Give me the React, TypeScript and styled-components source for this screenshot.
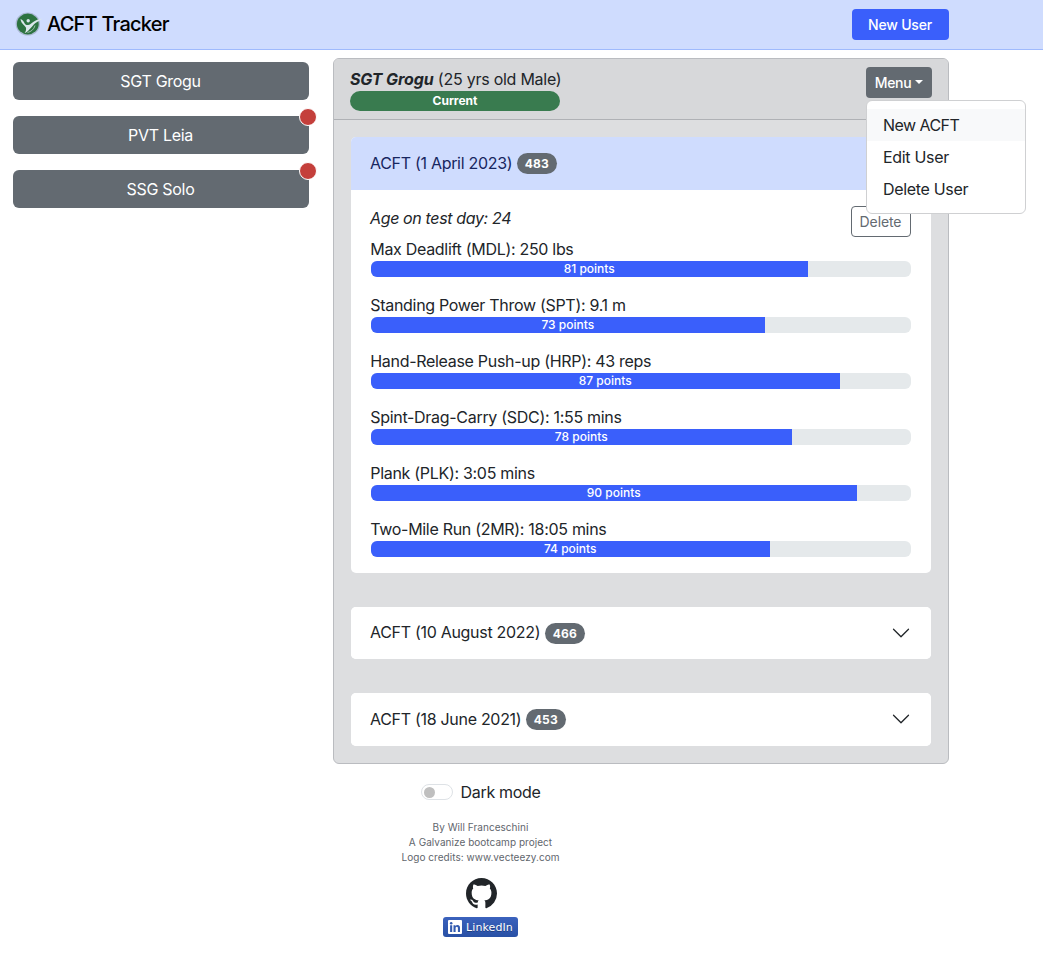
import React from 'react';
import styled, { createGlobalStyle } from 'styled-components';
import { BsChevronDown, BsGithub } from 'react-icons/bs';

const GlobalStyle = createGlobalStyle`
  *, *::before, *::after { box-sizing: border-box; }
  body {
    margin: 0;
    background: #fff;
    color: #212529;
    font-family: Inter, "Liberation Sans", sans-serif;
    font-size: 16px;
    line-height: 24px;
    letter-spacing: -0.3px;
  }
  button { font: inherit; letter-spacing: inherit; }
`;

const Navbar = styled.header`
  height: 50px;
  background: #cfdcfe;
  border-bottom: 1px solid #9fbafd;
`;

const Container = styled.div`
  width: 960px;
  margin-left: 1px;
  padding: 0 12px;
`;

const NavInner = styled(Container)`
  display: flex;
  align-items: center;
  justify-content: space-between;
  height: 49px;
`;

const Brand = styled.div`
  display: flex;
  align-items: center;
  gap: 4px;
  padding: 0 0 2px 2px;
  color: #000;
  font-size: 20px;
  font-weight: 500;
  letter-spacing: -0.77px;
  line-height: 30px;
`;

const NewUserButton = styled.button`
  width: 97px;
  height: 31px;
  padding: 0 1px 0 0;
  border: 0;
  border-radius: 4px;
  background: #3a5ffb;
  color: #fff;
  font-size: 14px;
  font-weight: 500;
  letter-spacing: -0.2px;
`;

const Columns = styled(Container)`
  display: grid;
  grid-template-columns: 296px 616px;
  column-gap: 24px;
  align-items: start;
  padding-top: 8px;
`;

const Sidebar = styled.nav`
  display: flex;
  flex-direction: column;
  gap: 16px;
  padding-top: 4px;
`;

const UserButton = styled.button`
  position: relative;
  height: 38px;
  padding: 0 1px 0 0;
  border: 0;
  border-radius: 6px;
  background: #636a71;
  color: #fff;
`;

const AlertDot = styled.span`
  position: absolute;
  top: -8px;
  right: -8px;
  width: 18px;
  height: 18px;
  border: 1px solid #fff;
  border-radius: 50%;
  background: #c43f3b;
`;

const Card = styled.main`
  border: 1px solid #babcc0;
  border-radius: 6px;
  background: #dddee0;
`;

const CardHeader = styled.div`
  display: flex;
  justify-content: space-between;
  align-items: flex-start;
  height: 61px;
  padding: 8px 16px;
  border-bottom: 1px solid #afb1b5;
  border-radius: 5px 5px 0 0;
  background: #d7d8da;
`;

const Identity = styled.div`
  width: 211px;
  white-space: nowrap;
  letter-spacing: -0.25px;

  strong { letter-spacing: -0.1px; }
`;

const CurrentBadge = styled.div`
  width: 210px;
  height: 20px;
  border-radius: 10px;
  background: #397b4f;
  color: #fff;
  font-size: 12px;
  font-weight: 700;
  line-height: 20px;
  letter-spacing: 0;
  text-align: center;
`;

const Dropdown = styled.div`
  position: relative;
`;

const MenuButton = styled.button`
  display: flex;
  align-items: center;
  justify-content: center;
  gap: 4px;
  width: 66px;
  height: 31px;
  padding: 0;
  border: 0;
  border-radius: 4px;
  background: #636a71;
  color: #fff;
  font-size: 14px;
  font-weight: 500;
`;

const Caret = styled.span`
  margin-top: -2px;
  border-top: 4px solid #fff;
  border-left: 4px solid transparent;
  border-right: 4px solid transparent;
`;

const MenuList = styled.ul`
  position: absolute;
  z-index: 2;
  top: 33px;
  left: 0;
  width: 160px;
  height: 114px;
  margin: 0;
  padding: 8px 0;
  border: 1px solid #cfd0d2;
  border-radius: 6px;
  background: #fff;
  list-style: none;
`;

const MenuItem = styled.li<{ $active?: boolean }>`
  height: 32px;
  padding: 4px 16px;
  background: ${p => (p.$active ? '#f8f9fa' : 'transparent')};
  letter-spacing: ${p => (p.$active ? -0.55 : -0.32)}px;
`;

const CardBody = styled.div`
  display: flex;
  flex-direction: column;
  gap: 34px;
  padding: 17px;
`;

const Test = styled.section`
  border-radius: 5px;
  background: #fff;

  &:nth-child(2) { height: 52px; }
  &:nth-child(3) { height: 53px; }
`;

const TestHeader = styled.div<{ $open?: boolean }>`
  display: flex;
  align-items: center;
  height: ${p => (p.$open ? '53px' : '100%')};
  padding: 0 20px 0 19px;
  border-radius: ${p => (p.$open ? '5px 5px 0 0' : '5px')};
  background: ${p => (p.$open ? '#cfdcfe' : '#fff')};
  color: ${p => (p.$open ? '#17265f' : '#212529')};

  svg { margin: 0 0 1px auto; }
`;

const TestDate = styled.span`
  height: 26px;
`;

const Score = styled.span`
  width: 40px;
  height: 21px;
  margin-left: 4.500px;
  border-radius: 11px;
  background: #636a71;
  color: #fff;
  font-size: 12px;
  font-weight: 700;
  line-height: 21px;
  letter-spacing: 0.2px;
  text-align: center;
`;

const TestBody = styled.div`
  padding: 16px 20px;
`;

const TestTop = styled.div`
  display: flex;
  justify-content: space-between;
  height: 31px;

  em { margin-left: -1px; letter-spacing: -0.36px; }
`;

const DeleteButton = styled.button`
  width: 60px;
  height: 31px;
  padding: 0 1px 0 0;
  border: 1px solid #636a71;
  border-radius: 4px;
  background: #fff;
  color: #636a71;
  font-size: 14px;
  letter-spacing: -0.1px;
`;

const Events = styled.div`
  display: flex;
  flex-direction: column;
  gap: 16px;
`;

const EventLabel = styled.div`
  margin-left: -0.75px;
`;

const Track = styled.div`
  height: 16px;
  overflow: hidden;
  border-radius: 6px;
  background: #e5e9eb;
`;

const Fill = styled.div`
  height: 16px;
  padding-right: 0.5px;
  background: #3a5ffb;
  color: #fff;
  font-size: 12px;
  font-weight: 500;
  line-height: 16px;
  letter-spacing: 0;
  text-align: center;
`;

const Footer = styled(Container)`
  display: flex;
  flex-direction: column;
  align-items: center;
  padding: 16px 13px 0 12px;
`;

const SwitchLabel = styled.label`
  display: flex;
  align-items: center;
  gap: 8px;
  letter-spacing: -0.33px;
`;

const Switch = styled.span`
  display: flex;
  align-items: center;
  width: 32px;
  height: 16px;
  padding-left: 2px;
  border: 1px solid #dee2e6;
  border-radius: 8px;

  &::before {
    content: '';
    width: 11px;
    height: 11px;
    border-radius: 50%;
    background: #bfbfbf;
  }
`;

const Credits = styled.div`
  margin: 16px 0 13px;
  color: #5f666d;
  font-size: 10px;
  line-height: 15px;
  letter-spacing: 0.04px;
  text-align: center;
`;

const GithubLink = styled.a`
  display: flex;
  padding-left: 1px;
  color: #212529;
`;

const LinkedInBadge = styled.a`
  display: flex;
  align-items: center;
  gap: 4px;
  width: 75px;
  height: 20px;
  margin-top: 8px;
  padding-left: 5px;
  border-radius: 3px;
  background: linear-gradient(#3b62bd, #2850a5);
  color: #fff;
  font-family: "DejaVu Sans", sans-serif;
  font-size: 11px;
  line-height: 20px;
  letter-spacing: 0.1px;
  text-shadow: 0 1px 0 rgba(1, 1, 1, 0.3);

  span { padding-top: 1px; }
`;

const Logo = () => (
  <svg width="28" height="24" viewBox="0 0 28 24">
    <ellipse cx="12.800" cy="12" rx="12.200" ry="11.600" fill="#a9b9d2" />
    <ellipse cx="12.800" cy="12" rx="10.900" ry="10.400" fill="#2d7340" />
    <circle cx="13.200" cy="8.800" r="1.700" fill="#dbe7ea" />
    <path d="M5.500 7c2.200.8 3.200 2.600 4.200 4.500.8 1.200 2 1.700 3.500 1.500 2.500-.3 4-2.800 7-4.300 2.200-1 4.500-1.300 7-2.200-2.200 2.400-4.700 3-6.700 4.600-2.200 1.900-3.300 3.400-5 5.200-1.500 1.800-3.200 3.700-6 5 1.500-2.300 1.900-4 1.400-5.800C9 12.500 6 11.500 5.500 7z" fill="#dbe7ea" />
    <path d="M12.500 20.500c3.500-.8 6.500-3 7.500-7" fill="none" stroke="#a7c2b5" strokeWidth=".9" />
  </svg>
);

const LinkedInMark = () => (
  <svg width="14" height="14" viewBox="0 0 14 14">
    <rect width="14" height="14" rx="1" fill="#fff" />
    <circle cx="3.200" cy="3.200" r="1.250" fill="#335bb0" />
    <path d="M2.100 5.300h2.100V12H2.100zM5.500 5.300h2v.9c.4-.7 1.100-1.100 2-1.100 2 0 2.500 1.300 2.500 3.100V12H9.900V8.600c0-.9 0-1.800-1.100-1.800S7.600 7.700 7.600 8.600V12H5.500z" fill="#335bb0" />
  </svg>
);

const users = [
  { name: 'SGT Grogu', alert: false },
  { name: 'PVT Leia', alert: true },
  { name: 'SSG Solo', alert: true },
];

const events = [
  { label: 'Max Deadlift (MDL): 250 lbs', points: 81 },
  { label: 'Standing Power Throw (SPT): 9.1 m', points: 73 },
  { label: 'Hand-Release Push-up (HRP): 43 reps', points: 87 },
  { label: 'Spint-Drag-Carry (SDC): 1:55 mins', points: 78 },
  { label: 'Plank (PLK): 3:05 mins', points: 90 },
  { label: 'Two-Mile Run (2MR): 18:05 mins', points: 74 },
];

const olderTests = [
  { date: '10 August 2022', score: 466 },
  { date: '18 June 2021', score: 453 },
];

export default function App() {
  return (
    <>
      <GlobalStyle />
      <Navbar>
        <NavInner>
          <Brand><Logo />ACFT Tracker</Brand>
          <NewUserButton>New User</NewUserButton>
        </NavInner>
      </Navbar>
      <Columns>
        <Sidebar>
          {users.map(u => (
            <UserButton key={u.name}>{u.name}{u.alert && <AlertDot />}</UserButton>
          ))}
        </Sidebar>
        <Card>
          <CardHeader>
            <Identity>
              <strong><em>SGT Grogu</em></strong> (25 yrs old Male)
              <CurrentBadge>Current</CurrentBadge>
            </Identity>
            <Dropdown>
              <MenuButton>Menu<Caret /></MenuButton>
              <MenuList>
                <MenuItem $active>New ACFT</MenuItem>
                <MenuItem>Edit User</MenuItem>
                <MenuItem>Delete User</MenuItem>
              </MenuList>
            </Dropdown>
          </CardHeader>
          <CardBody>
            <Test>
              <TestHeader $open><TestDate>ACFT (1 April 2023)</TestDate><Score>483</Score></TestHeader>
              <TestBody>
                <TestTop><em>Age on test day: 24</em><DeleteButton>Delete</DeleteButton></TestTop>
                <Events>
                  {events.map(e => (
                    <div key={e.label}>
                      <EventLabel>{e.label}</EventLabel>
                      <Track><Fill style={{ width: `${Math.floor(e.points * 5.4)}px` }}>{e.points} points</Fill></Track>
                    </div>
                  ))}
                </Events>
              </TestBody>
            </Test>
            {olderTests.map(t => (
              <Test key={t.date}>
                <TestHeader><TestDate>ACFT ({t.date})</TestDate><Score>{t.score}</Score><BsChevronDown size={20} /></TestHeader>
              </Test>
            ))}
          </CardBody>
        </Card>
      </Columns>
      <Footer as="footer">
        <SwitchLabel><Switch />Dark mode</SwitchLabel>
        <Credits>
          By Will Franceschini<br />
          A Galvanize bootcamp project<br />
          Logo credits: www.vecteezy.com
        </Credits>
        <GithubLink><BsGithub size={31} /></GithubLink>
        <LinkedInBadge><LinkedInMark /><span>LinkedIn</span></LinkedInBadge>
      </Footer>
    </>
  );
}
